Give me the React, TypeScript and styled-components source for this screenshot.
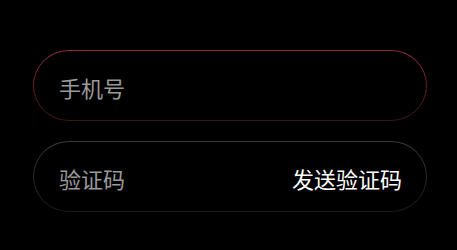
import React from "react";
import styled, { createGlobalStyle } from "styled-components";

const GlobalStyle = createGlobalStyle`
  html, body {
    margin: 0;
    padding: 0;
    background: #000;
  }
  body {
    font-family: "Noto Sans CJK SC", "Noto Sans", sans-serif;
  }
`;

const Page = styled.div`
  width: 457px;
  height: 250px;
  box-sizing: border-box;
  padding: 50px 30px 0 33px;
  display: flex;
  flex-direction: column;
  gap: 20px;
`;

const Field = styled.div<{ $active?: boolean }>`
  height: 71px;
  box-sizing: border-box;
  border: 1px solid transparent;
  border-radius: 36px;
  background: linear-gradient(#000, #000) padding-box,
    ${({ $active }) =>
        $active
          ? "linear-gradient(to bottom, #8e2b3a, #3e1219)"
          : "linear-gradient(to bottom, #3a3a3a, #1a1a1a)"}
      border-box;
  display: flex;
  align-items: center;
  justify-content: space-between;
  padding: 0 24px 0 25px;
`;

const Placeholder = styled.span`
  font-size: 22px;
  color: #9a9a9a;
  line-height: 1;
  padding-top: 2px;
`;

const SendCode = styled.button`
  background: none;
  border: none;
  padding: 0;
  font-family: inherit;
  font-size: 22px;
  color: #fff;
  line-height: 1;
  cursor: pointer;
  padding-top: 2px;
`;

export default function App() {
  return (
    <>
      <GlobalStyle />
      <Page>
        <Field $active>
          <Placeholder>手机号</Placeholder>
        </Field>
        <Field>
          <Placeholder>验证码</Placeholder>
          <SendCode>发送验证码</SendCode>
        </Field>
      </Page>
    </>
  );
}
